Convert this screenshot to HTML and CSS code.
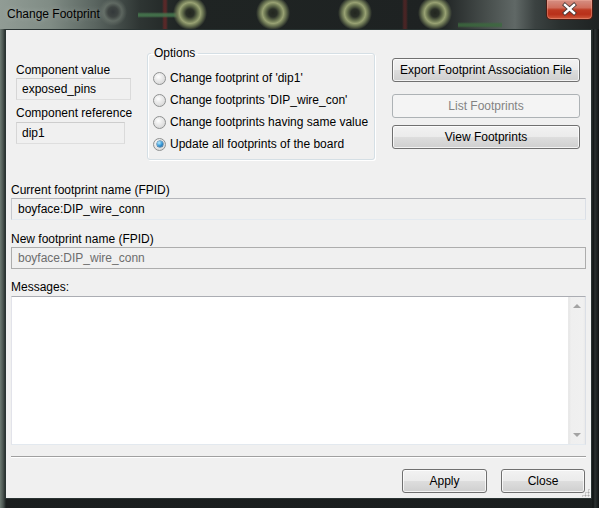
FILE: index.html
```html
<!DOCTYPE html>
<html>
<head>
<meta charset="utf-8">
<title>Change Footprint</title>
<link rel="stylesheet" href="styles.css">
</head>
<body>
<div class="window">
  <div class="titlebar">
    <span class="title">Change Footprint</span>
    <div class="close-btn">
      <svg width="47" height="20" viewBox="0 0 47 20">
        <path d="M19 6 L28 14 M28 6 L19 14" stroke="#4a3a38" stroke-width="4.2" stroke-linecap="square" fill="none"/>
        <path d="M19 6 L28 14 M28 6 L19 14" stroke="#ffffff" stroke-width="2.4" stroke-linecap="square" fill="none"/>
      </svg>
    </div>
  </div>
  <div class="client">
    <div class="top-row">
      <div class="comp-col">
        <div class="label">Component value</div>
        <div class="field ro value-field">exposed_pins</div>
        <div class="label ref-label">Component reference</div>
        <div class="field ro ref-field">dip1</div>
      </div>
      <fieldset class="options">
        <legend>Options</legend>
        <div class="radio-row"><span class="radio"></span>Change footprint of 'dip1'</div>
        <div class="radio-row"><span class="radio"></span>Change footprints 'DIP_wire_con'</div>
        <div class="radio-row"><span class="radio"></span>Change footprints having same value</div>
        <div class="radio-row"><span class="radio checked"></span>Update all footprints of the board</div>
      </fieldset>
      <div class="btn-col">
        <div class="btn export-btn">Export Footprint Association File</div>
        <div class="btn disabled list-btn">List Footprints</div>
        <div class="btn view-btn">View Footprints</div>
      </div>
    </div>
    <div class="label current-label">Current footprint name (FPID)</div>
    <div class="field current-field">boyface:DIP_wire_conn</div>
    <div class="label new-label">New footprint name (FPID)</div>
    <div class="field disabled-field">boyface:DIP_wire_conn</div>
    <div class="label msg-label">Messages:</div>
    <div class="messages">
      <div class="msg-body"></div>
      <div class="scrollbar">
        <span class="arrow up"></span>
        <span class="arrow down"></span>
      </div>
    </div>
    <div class="separator"></div>
    <div class="footer">
      <div class="btn apply-btn">Apply</div>
      <div class="btn close-dlg-btn">Close</div>
    </div>
    <div class="grip"></div>
  </div>
</div>
</body>
</html>
```

FILE: styles.css
```css
* { box-sizing: border-box; }

html, body {
  margin: 0;
  padding: 0;
  background: #1b1f1f;
}

body {
  font-family: "Liberation Sans", Arial, sans-serif;
  font-size: 12px;
  color: #000;
}

.window {
  position: relative;
  width: 599px;
  height: 508px;
  display: flex;
  flex-direction: column;
  overflow: hidden;
  background:
    linear-gradient(to right, #6d7a72 0, #4b5551 3px, #2a3230 5px, transparent 6px),
    linear-gradient(to left, #101313 0, #2b3131 4px, #0f1212 6px, transparent 7px),
    linear-gradient(to bottom, #3c4542 0, #232928 60%, #1a1e1e 100%);
}

.titlebar {
  height: 29px;
  flex: none;
  display: flex;
  align-items: flex-start;
  background:
    radial-gradient(circle at 190px 13px, #22261f 0, #2a2f27 4px, #6c7752 8px, #98a173 10.5px, #6a7452 13px, rgba(40,46,40,0) 17px),
    radial-gradient(circle at 273px 13px, #22261f 0, #2a2f27 4px, #6c7752 8px, #98a173 10.5px, #6a7452 13px, rgba(40,46,40,0) 17px),
    radial-gradient(circle at 355px 13px, #22261f 0, #2a2f27 4px, #6c7752 8px, #98a173 10.5px, #6a7452 13px, rgba(40,46,40,0) 17px),
    radial-gradient(circle at 435px 13px, #22261f 0, #2a2f27 4px, #6c7752 8px, #98a173 10.5px, #6a7452 13px, rgba(40,46,40,0) 17px),
    radial-gradient(circle at 113px 12px, #33383a 0, #3e4442 5px, rgba(120,130,120,0.5) 9px, rgba(100,110,100,0) 14px),
    linear-gradient(to bottom, transparent 12px, rgba(70,120,78,0.85) 14px, rgba(70,120,78,0.85) 16px, transparent 18px) 138px 0 / 42px 29px no-repeat,
    linear-gradient(to right, transparent 0, rgba(110,40,40,0.7) 2px, rgba(110,40,40,0.7) 4px, transparent 6px) 162px 0 / 8px 29px no-repeat,
    linear-gradient(to right, transparent 0, rgba(100,38,38,0.6) 2px, rgba(100,38,38,0.6) 4px, transparent 6px) 402px 0 / 8px 29px no-repeat,
    linear-gradient(to bottom, transparent 22px, rgba(60,106,62,0.8) 24px, rgba(60,106,62,0.8) 26px, transparent 28px) 458px 0 / 44px 29px no-repeat,
    linear-gradient(to right, #919c95 0, #808c85 50px, #5a6560 95px, #2e3533 140px, #1f2423 180px, #1e2222 440px, #4a514f 490px, #606866 515px, #3b4241 535px, #2a302f 560px, #1e2222 599px);
}

.title {
  margin-top: 7px;
  padding-left: 7px;
  line-height: 15px;
  font-size: 12px;
  color: #000;
  text-shadow: 0 0 6px rgba(255, 255, 255, 0.35);
}

.close-btn {
  margin-left: auto;
  margin-right: 6px;
  width: 47px;
  height: 20px;
  border: 1px solid #4a1c14;
  border-top: none;
  border-radius: 0 0 5px 5px;
  background: linear-gradient(to bottom, #d58f83 0%, #cf6e5c 40%, #bd3a22 52%, #b8301a 75%, #cf5a3c 100%);
  box-shadow: inset 0 0 0 1px rgba(255, 190, 170, 0.35);
  overflow: hidden;
}

.close-btn svg {
  display: block;
  margin: -1px 0 0 -1px;
}

.client {
  position: relative;
  flex: 1;
  margin: 0 7px 9px 5px;
  padding: 0 5px;
  background: #f0f0f0;
  border: 1px solid #2a3433;
  display: flex;
  flex-direction: column;
}

.label {
  line-height: 15px;
  height: 15px;
  white-space: nowrap;
}

.field {
  height: 22px;
  line-height: 20px;
  padding-left: 5px;
  border: 1px solid;
  white-space: nowrap;
}

/* top row */
.top-row {
  display: flex;
  align-items: flex-start;
}

.comp-col {
  margin-left: 5px;
  padding-top: 33px;
  width: 115px;
  flex: none;
}

.comp-col .field { margin-top: 0; }

.ro {
  background: #f0f0f0;
  border-color: #cdcdcd #dadada #dedede #d6d6d6;
}

.value-field { width: 115px; }

.ref-label { margin-top: 6px; }

.comp-col .ref-field {
  width: 109px;
  margin-top: 1px;
}

.options {
  flex: none;
  width: 228px;
  margin: 16px 0 0 16px;
  padding: 6px 0 4px 5px;
  border: 1px solid #d5dfe5;
  border-radius: 3px;
  box-shadow: inset 1px 1px 0 #fff, 1px 1px 0 #fff;
}

.options legend {
  padding: 0 3px;
  margin-left: -2px;
  line-height: 15px;
  font-size: 12px;
}

.radio-row {
  height: 22px;
  display: flex;
  align-items: center;
  white-space: nowrap;
}

.radio {
  position: relative;
  width: 13px;
  height: 13px;
  margin-right: 4px;
  border-radius: 50%;
  border: 1px solid #8f9191;
  background: radial-gradient(circle at 40% 35%, #ffffff 0, #ececec 35%, #cfcfcf 100%);
  flex: none;
}

.radio.checked::after {
  content: "";
  position: absolute;
  left: 2.5px;
  top: 2.5px;
  width: 6px;
  height: 6px;
  border-radius: 50%;
  background: radial-gradient(circle at 35% 30%, #b9ecff 0, #3a9ad8 50%, #0c4e8c 100%);
  box-shadow: 0 0 0 0.5px #1d5a8a;
}

.btn-col {
  flex: none;
  width: 188px;
  margin: 28px 0 0 17px;
}

.btn {
  height: 24px;
  line-height: 22px;
  text-align: center;
  white-space: nowrap;
  border: 1px solid #707070;
  border-radius: 3px;
  background: linear-gradient(to bottom, #f2f2f2 0%, #ebebeb 48%, #dddddd 52%, #cfcfcf 100%);
  box-shadow: inset 0 0 0 1px rgba(255, 255, 255, 0.75);
}

.btn.disabled {
  color: #838383;
  border-color: #adb2b5;
  background: #f4f4f4;
  box-shadow: none;
}

.list-btn { margin-top: 12px; }

.view-btn {
  margin-top: 7px;
  height: 24px;
}

/* lower fields */
.current-label { margin-top: 23px; }

.current-field {
  margin-top: 0;
  padding-left: 6px;
  background: #f0f0f0;
  border-color: #b4b6bb #dbdfe6 #e3e9ef #c6c8ce;
}

.new-label { margin-top: 12px; }

.disabled-field {
  padding-left: 6px;
  color: #6d6d6d;
  background: #f0f0f0;
  border-color: #adadad;
}

.msg-label { margin-top: 11px; }

.messages {
  margin-top: 1px;
  height: 149px;
  display: flex;
  background: #fff;
  border: 1px solid;
  border-color: #abadb3 #dbdfe6 #e3e9ef #e2e3ea;
}

.msg-body { flex: 1; }

.scrollbar {
  position: relative;
  width: 17px;
  flex: none;
  background: linear-gradient(to right, #e6e6e6 0, #efefef 2px, #f0f0f0 14px, #e6e6e6 17px);
  border-left: 1px solid #e9e9e9;
}

.arrow {
  position: absolute;
  left: 4px;
  width: 0;
  height: 0;
  border-left: 4px solid transparent;
  border-right: 4px solid transparent;
}

.arrow.up {
  top: 7px;
  border-bottom: 4px solid #a3a3a3;
}

.arrow.down {
  bottom: 7px;
  border-top: 4px solid #a3a3a3;
}

.separator {
  margin-top: 11px;
  height: 2px;
  border-top: 1px solid #a0a0a0;
  border-bottom: 1px solid #ffffff;
}

.footer {
  margin-top: 11px;
  display: flex;
  justify-content: flex-end;
  gap: 14px;
  padding-right: 1px;
}

.apply-btn { width: 85px; }
.close-dlg-btn { width: 84px; }

.grip {
  position: absolute;
  right: 1px;
  bottom: 1px;
  width: 9px;
  height: 9px;
  background:
    radial-gradient(circle, #a8a8a8 0.8px, transparent 1.2px) 0 0 / 3px 3px;
  clip-path: polygon(100% 0, 100% 100%, 0 100%);
}
```
